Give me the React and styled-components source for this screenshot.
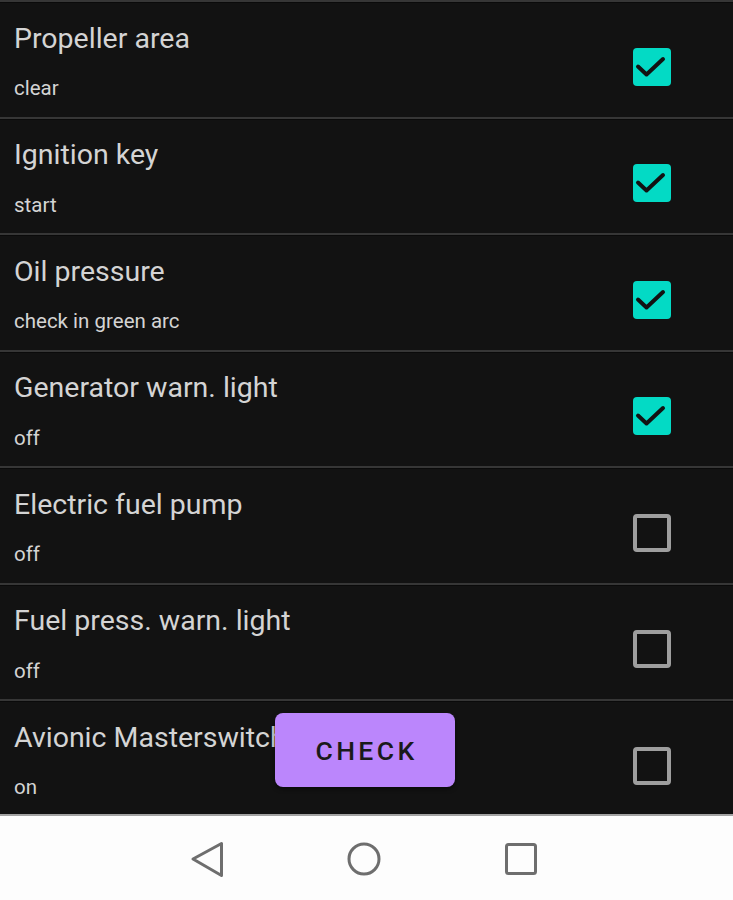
import styled, { createGlobalStyle } from "styled-components";

const GlobalStyle = createGlobalStyle`
  html, body {
    margin: 0;
    padding: 0;
    background: #121212;
  }
  body {
    font-family: Roboto, "Liberation Sans", sans-serif;
  }
`;

const Screen = styled.div`
  position: relative;
  width: 733px;
  height: 900px;
  display: flex;
  flex-direction: column;
  overflow: hidden;
`;

const List = styled.div`
  height: 814px;
  overflow: hidden;
  background: #121212;
`;

const Row = styled.div`
  box-sizing: border-box;
  height: 116.5px;
  display: flex;
  align-items: flex-start;
  padding: 19.5px 62px 0 14px;
  border-top: 2px solid #363636;
  box-shadow: inset 0 1px 0 #0a0a0a;
`;

const Texts = styled.div`
  flex: 1;
  display: flex;
  flex-direction: column;
`;

const Title = styled.div`
  font-size: 28.5px;
  line-height: 34px;
  color: #d4d4d4;
`;

const Subtitle = styled.div`
  margin-top: 20.5px;
  font-size: 20.5px;
  line-height: 24px;
  color: #d4d4d4;
`;

const Box = styled.div`
  box-sizing: border-box;
  margin-top: 26px;
  width: 38px;
  height: 38px;
  border-radius: 4px;
  display: flex;
  align-items: center;
  justify-content: center;
  background: ${(p) => (p.checked ? "#03dac5" : "transparent")};
  border: ${(p) => (p.checked ? "none" : "4.5px solid #9e9e9e")};
`;

const CheckButton = styled.button`
  position: absolute;
  left: 275px;
  top: 713px;
  width: 180px;
  height: 74px;
  border: none;
  border-radius: 8px;
  background: #bb86fc;
  color: #1a1a1a;
  font-family: Roboto, "Liberation Sans", sans-serif;
  font-weight: 500;
  font-size: 26.5px;
  letter-spacing: 3.4px;
  padding: 0 0 0 3px;
  box-shadow: 0 2px 4px rgba(0, 0, 0, 0.5);
`;

const NavBar = styled.div`
  box-sizing: border-box;
  height: 86px;
  border-top: 2px solid #a3a3a3;
  background: #fdfdfd;
  display: flex;
  align-items: center;
  justify-content: flex-start;
  gap: 91px;
  padding: 2px 0 0 174px;
`;

const NavIcon = styled.svg`
  width: 66px;
  height: 40px;
  fill: none;
  stroke: #6e6e6e;
  stroke-width: 3;
  stroke-linejoin: round;
  stroke-linecap: round;
`;

const items = [
  ["Propeller area", "clear", true],
  ["Ignition key", "start", true],
  ["Oil pressure", "check in green arc", true],
  ["Generator warn. light", "off", true],
  ["Electric fuel pump", "off", false],
  ["Fuel press. warn. light", "off", false],
  ["Avionic Masterswitch", "on", false],
];

function Checkbox({ checked }) {
  return (
    <Box checked={checked}>
      {checked && (
        <svg width="38" height="38" viewBox="0 0 38 38">
          <path
            d="M5 18.5 L13.5 26.5 L30 11"
            fill="none"
            stroke="#121212"
            strokeWidth="4"
            strokeLinecap="round"
            strokeLinejoin="round"
          />
        </svg>
      )}
    </Box>
  );
}

export default function App() {
  return (
    <Screen>
      <GlobalStyle />
      <List>
        {items.map(([title, sub, checked]) => (
          <Row key={title}>
            <Texts>
              <Title>{title}</Title>
              <Subtitle>{sub}</Subtitle>
            </Texts>
            <Checkbox checked={checked} />
          </Row>
        ))}
      </List>
      <CheckButton>CHECK</CheckButton>
      <NavBar>
        <NavIcon viewBox="0 0 66 40">
          <path d="M19 20 L47.5 4.5 L47.5 36.5 Z" />
        </NavIcon>
        <NavIcon viewBox="0 0 66 40">
          <circle cx="33" cy="20" r="15" />
        </NavIcon>
        <NavIcon viewBox="0 0 66 40">
          <rect x="18.5" y="5.5" width="29" height="29" rx="2" />
        </NavIcon>
      </NavBar>
    </Screen>
  );
}
